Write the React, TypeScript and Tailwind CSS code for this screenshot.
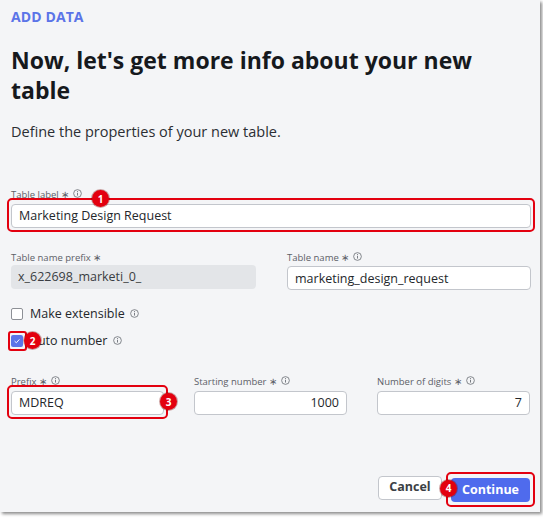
import React from "react";

const Info = () => (
  <svg width="9" height="9" viewBox="0 0 10 10" className="inline-block ml-[4px] align-[0px]">
    <circle cx="5" cy="5" r="4.3" fill="none" stroke="#6b6f76" strokeWidth="0.9" />
    <line x1="5" y1="4.3" x2="5" y2="7.3" stroke="#6b6f76" strokeWidth="1" />
    <circle cx="5" cy="2.9" r="0.6" fill="#6b6f76" />
  </svg>
);

const Badge = ({ n, className }: { n: number; className: string }) => (
  <div
    className={
      "absolute w-[17px] h-[17px] rounded-full bg-[#e3000f] text-white text-[10px] font-bold flex items-center justify-center leading-none shadow-[0_0_0_1px_rgba(120,0,0,0.35)] " +
      className
    }
  >
    {n}
  </div>
);

const Label = ({ text, info = true }: { text: string; info?: boolean }) => (
  <div className="text-[9.5px] leading-[12px] text-[#5c6067] h-[12px] mb-[1px] whitespace-nowrap">
    {text} <span>∗</span>
    {info && <Info />}
  </div>
);

const inputCls =
  "w-full h-[24px] rounded-[4px] border border-[#c3c6cc] bg-white px-[7px] text-[12.5px] text-[#24272b] outline-none";

export default function App() {
  return (
    <div className="w-[543px] h-[518px] bg-white overflow-hidden" style={{ fontFamily: '"Open Sans", "Noto Sans", sans-serif' }}>
      <div className="w-[540px] h-[512px] bg-[#f4f5f7] shadow-[2px_2px_3px_rgba(0,0,0,0.45)] flex flex-col pl-[11px] pr-[9px]">
        <div className="pt-[8px] text-[14px] leading-[18px] font-bold text-[#5b74e8] tracking-[0.1px]">ADD DATA</div>
        <h1 className="mt-[19px] text-[23px] leading-[30px] font-bold text-[#16191d]">
          Now, let's get more info about your new table
        </h1>
        <p className="mt-[17px] text-[14.5px] leading-[20px] text-[#2b2e33]">Define the properties of your new table.</p>

        <div className="mt-[47px]">
          <Label text="Table label" />
          <div className="relative">
            <input readOnly value="Marketing Design Request" className={inputCls} />
            <div className="absolute -left-[4px] -right-[4px] -top-[4px] -bottom-[4px] rounded-[5px] border-2 border-[#e3000f] pointer-events-none" />
            <Badge n={1} className="left-[81px] -top-[12px]" />
          </div>
        </div>

        <div className="mt-[24px] flex gap-[31px]">
          <div className="w-[245px]">
            <Label text="Table name prefix" info={false} />
            <div className="h-[24px] rounded-[4px] bg-[#e3e5e8] px-[7px] text-[12.5px] leading-[24px] text-[#3a3d42]">x_622698_marketi_0_</div>
          </div>
          <div className="flex-1">
            <Label text="Table name" />
            <input readOnly value="marketing_design_request" className={inputCls} />
          </div>
        </div>

        <div className="mt-[17px] flex items-center h-[14px]">
          <div className="w-[12px] h-[12px] rounded-[2px] border border-[#8d9096] bg-white" />
          <span className="ml-[7px] text-[12.5px] text-[#24272b]">Make extensible</span>
          <span className="ml-[1px] -mt-[5px]"><Info /></span>
        </div>

        <div className="mt-[13px] flex items-center h-[14px] relative">
          <div className="w-[12px] h-[12px] rounded-[2px] bg-[#5b74e8] flex items-center justify-center">
            <svg width="8" height="8" viewBox="0 0 10 10">
              <path d="M2 5.2 L4.2 7.2 L8 3" fill="none" stroke="white" strokeWidth="1.2" />
            </svg>
          </div>
          <span className="ml-[7px] text-[12.5px] text-[#24272b]">Auto number</span>
          <span className="ml-[2px] -mt-[5px]"><Info /></span>
          <div className="absolute left-[-3px] top-[-3px] w-[19px] h-[20px] rounded-[3px] border-2 border-[#e3000f] pointer-events-none" />
          <Badge n={2} className="left-[13px] top-[-2px]" />
        </div>

        <div className="mt-[28px] flex gap-[30px]">
          <div className="w-[153px]">
            <Label text="Prefix" />
            <div className="relative">
              <input readOnly value="MDREQ" className={inputCls} />
              <div className="absolute -left-[4px] -right-[4px] -top-[4px] -bottom-[4px] rounded-[5px] border-2 border-[#e3000f] pointer-events-none" />
              <Badge n={3} className="left-[149px] top-[4px]" />
            </div>
          </div>
          <div className="w-[153px]">
            <Label text="Starting number" />
            <input readOnly value="1000" className={inputCls + " text-right"} />
          </div>
          <div className="w-[153px]">
            <Label text="Number of digits" />
            <input readOnly value="7" className={inputCls + " text-right"} />
          </div>
        </div>

        <div className="mt-auto mb-[10px] flex justify-end pr-[1px] gap-[9px]">
          <button className="h-[24px] w-[64px] rounded-[4px] border border-[#c3c6cc] bg-white text-[12.5px] font-bold text-[#3b3f45]">Cancel</button>
          <div className="relative">
            <button className="h-[24px] w-[79px] rounded-[4px] bg-[#4f6bed] text-[12.5px] font-bold text-white">Continue</button>
            <div className="absolute -left-[5px] -right-[5px] -top-[4px] -bottom-[5px] rounded-[5px] border-2 border-[#e3000f] pointer-events-none" />
            <Badge n={4} className="-left-[11px] top-[4px]" />
          </div>
        </div>
      </div>
    </div>
  );
}
